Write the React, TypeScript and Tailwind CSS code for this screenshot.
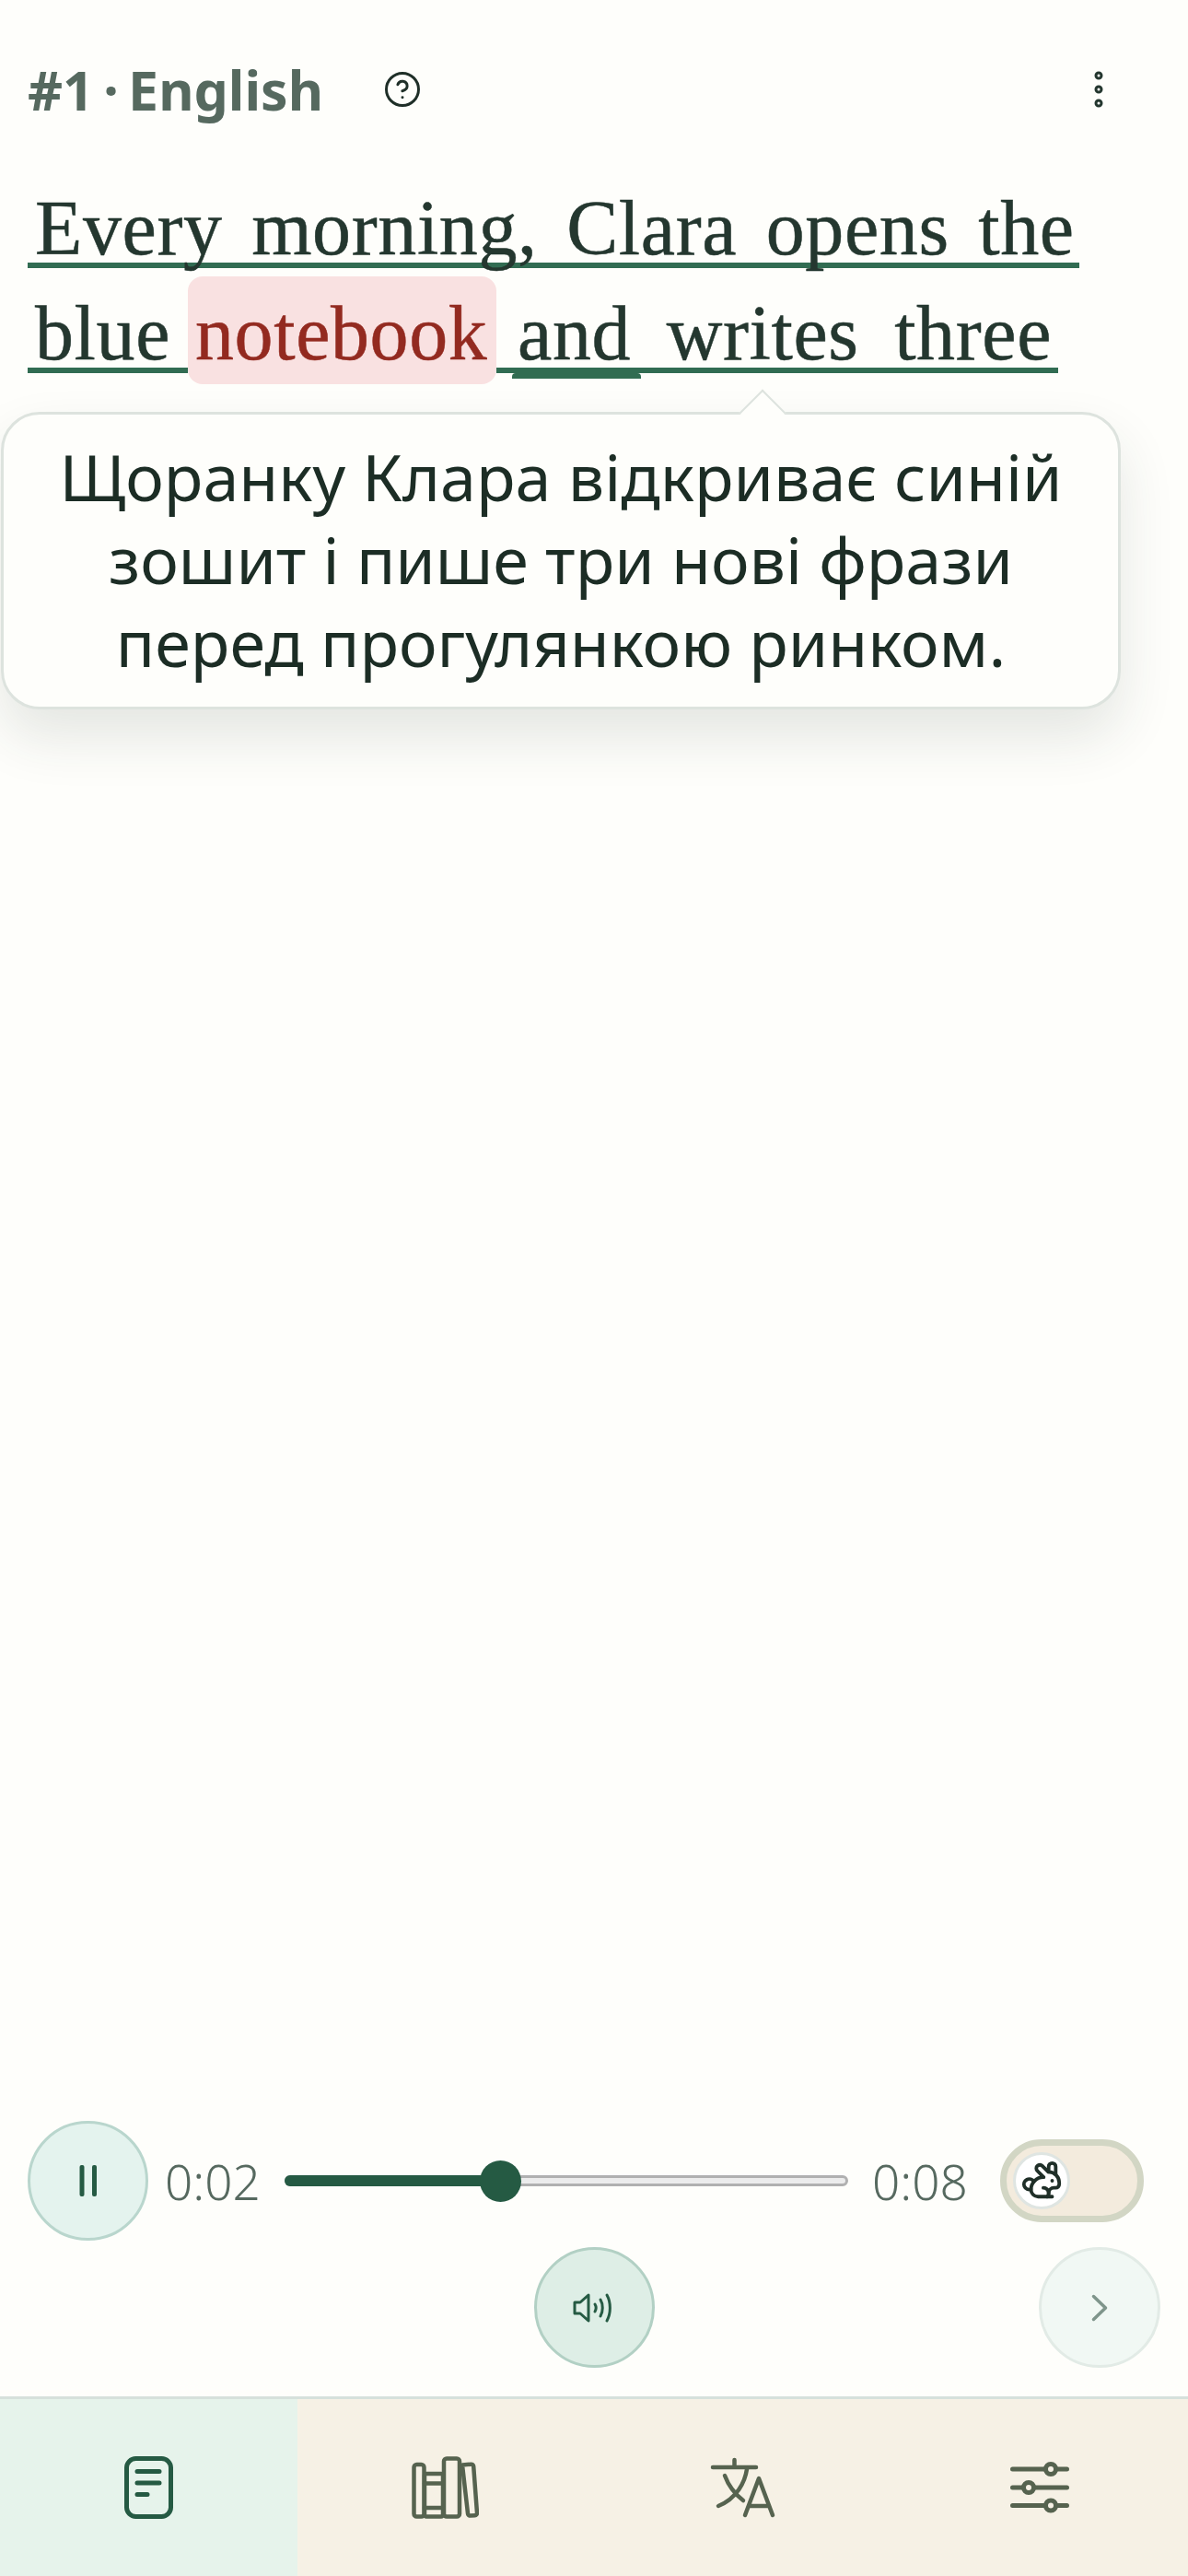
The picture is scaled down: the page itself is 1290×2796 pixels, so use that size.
import React from "react";
import { Rabbit, CircleHelp } from "lucide-react";

export default function App() {
  return (
    <div className="relative flex h-[2796px] w-[1290px] flex-col overflow-hidden bg-[#fefefb]">
      <header className="flex h-[137px] shrink-0 items-end pl-[30px] pr-[90px]">
        <div className="flex w-full items-center">
          <span className="text-[59px] font-bold leading-[80px] text-[#56695f] [word-spacing:-5px] [font-family:'Noto_Sans',sans-serif]">#1 · English</span>
          <CircleHelp className="ml-[65px] h-[42px] w-[42px] text-[#1f2f28]" strokeWidth={1.7} />
          <svg className="ml-auto h-[50px] w-[14px]" viewBox="0 0 14 50" fill="none" stroke="#24372f" strokeWidth="3">
            <circle cx="7" cy="10" r="3" />
            <circle cx="7" cy="25" r="3" />
            <circle cx="7" cy="40" r="3" />
          </svg>
        </div>
      </header>

      <main className="relative flex-1 pl-[30px] text-[84px] leading-[141px] tracking-[0.6px] text-[#24372f] [-webkit-text-stroke:0.5px] [font-family:'Liberation_Serif',serif]">
        <div className="mt-[40px] h-[114px] w-[1142px] whitespace-pre border-b-[6px] border-[#316c52] pl-[8px] [word-spacing:10px]">Every morning, Clara opens the</div>
        <div className="flex h-[126px] items-start">
          <span className="block h-[114px] w-[174px] border-b-[6px] border-[#316c52] pl-[8px]">blue</span>
          <span className="mt-[9px] block h-[117px] w-[335px] rounded-[16px] bg-[#f9e1e1] pl-[8px] leading-[123px] text-[#932a20]">notebook</span>
          <span className="relative block h-[114px] w-[610px] whitespace-pre border-b-[6px] border-[#316c52] pl-[23px] [word-spacing:17px]">
            and writes three
            <span className="absolute left-[17px] top-[114px] h-[6px] w-[140px] rounded-t-[4px] bg-[#316c52]" />
          </span>
        </div>
        <div className="absolute left-[1px] top-[310px] flex h-[323px] w-[1216px] flex-col justify-center rounded-[42px] border-[3px] border-[#dde3de] bg-[#fefefb] pb-[3px] text-center text-[70px] leading-[90px] tracking-normal text-[#1c2d25] shadow-[0_30px_60px_rgba(40,60,50,0.12)] [-webkit-text-stroke:0px] [font-family:'Noto_Sans',sans-serif]">
          <span className="absolute left-[806px] top-[-20px] h-[36px] w-[36px] rotate-45 border-l-[2px] border-t-[2px] border-[#dde3de] bg-[#fefefb]" />
          <span className="relative block">Щоранку Клара відкриває синій</span>
          <span className="relative block">зошит і пише три нові фрази</span>
          <span className="relative block">перед прогулянкою ринком.</span>
        </div>
      </main>

      <section className="shrink-0 pb-[31px] [font-family:'Noto_Sans',sans-serif]">
        <div className="flex items-center pl-[30px]">
          <button className="flex h-[130px] w-[131px] shrink-0 items-center justify-center rounded-full border-[3px] border-[#b9d6cd] bg-[#e4f3ee]">
            <svg className="h-[36px] w-[24px]" viewBox="0 0 24 36" fill="#255a43">
              <rect x="2.500" y="1" width="5" height="34" rx="2" />
              <rect x="16" y="1" width="5" height="34" rx="2" />
            </svg>
          </button>
          <span className="ml-[18px] w-[98px] whitespace-nowrap text-[53px] font-light leading-none text-[#56695f]">0:02</span>
          <div className="relative ml-[32px] h-[12px] w-[612px] rounded-full border-[3px] border-[#b0b0b0] bg-[#ececec]">
            <div className="absolute -left-[3px] -top-[3px] h-[12px] w-[234px] rounded-full bg-[#255a43]" />
            <div className="absolute left-[209px] top-[-19.5px] h-[45px] w-[45px] rounded-full bg-[#255a43]" />
          </div>
          <span className="ml-[26px] w-[98px] whitespace-nowrap text-[53px] font-light leading-none text-[#56695f]">0:08</span>
          <div className="ml-[41px] flex h-[90px] w-[156px] items-center rounded-full border-[7px] border-[#d2d6c4] bg-[#f3ebdd] pl-[7px]">
            <div className="flex h-[62px] w-[62px] items-center justify-center rounded-full border-[3px] border-[#dfe5e2] bg-white">
              <Rabbit className="h-[46px] w-[46px] text-[#1f2f28]" strokeWidth={2} />
            </div>
          </div>
        </div>
        <div className="mt-[7px] grid grid-cols-[1fr_auto_1fr] px-[30px]">
          <div />
          <button className="flex h-[131px] w-[131px] items-center justify-center rounded-full border-[3px] border-[#b2d0c4] bg-[#deeee6]">
            <svg className="h-[42px] w-[46px]" viewBox="0 0 46 42" fill="none" stroke="#255a43" strokeWidth="3" strokeLinecap="round" strokeLinejoin="round">
              <path d="M2 15v12h6l9 8V7l-9 8z" />
              <path d="M24 17c1.500 2.500 1.500 5.500 0 8" />
              <path d="M30 12c3 5 3 13 0 18" />
              <path d="M37 7c4.500 8 4.500 20 0 28" />
            </svg>
          </button>
          <div className="flex justify-end">
            <button className="flex h-[131px] w-[132px] items-center justify-center rounded-full border-[3px] border-[#e2ebe6] bg-[#f1f8f4]">
              <svg className="h-[30px] w-[18px]" viewBox="0 0 18 30" fill="none" stroke="#7f958b" strokeWidth="3.500" strokeLinecap="round" strokeLinejoin="round">
                <path d="M2.500 2.500 15.500 15l-13 12.500" />
              </svg>
            </button>
          </div>
        </div>
      </section>

      <nav className="grid h-[195px] shrink-0 grid-cols-4 border-t-[3px] border-[#d6e1dc] bg-[#f6f1e5]">
        <div className="flex items-center justify-center bg-[#e6f3eb]">
          <svg className="h-[68px] w-[53px]" viewBox="0 0 53 68" fill="none" stroke="#255a43" strokeWidth="5" strokeLinecap="round">
            <rect x="2.500" y="2.500" width="48" height="63" rx="10" />
            <path d="M14 16.500h24M14 29h24M14 41.500h11" />
          </svg>
        </div>
        <div className="flex items-center justify-center">
          <svg className="h-[68px] w-[73px]" viewBox="0 0 73 68" fill="none" stroke="#56634f" strokeWidth="4.500" strokeLinejoin="round" strokeLinecap="round">
            <rect x="2.500" y="9" width="11" height="56.500" rx="3" />
            <rect x="14" y="19" width="20" height="46.500" rx="2" />
            <path d="M14 29.500h20M14 56h20" />
            <rect x="35" y="2.500" width="17" height="63" rx="3" />
            <path d="M55 9.500l9.500-.8a2.500 2.500 0 0 1 2.700 2.300l3.800 50.500a2.500 2.500 0 0 1-2.300 2.700l-5 .4a2.500 2.500 0 0 1-2.700-2.300z" />
          </svg>
        </div>
        <div className="flex items-center justify-center">
          <svg className="h-[68px] w-[72px]" viewBox="0 0 72 68" fill="none" stroke="#56634f" strokeWidth="4.500" strokeLinecap="round" strokeLinejoin="round">
            <path d="M4 12h47M27.500 4v8" />
            <path d="M41 14c-2 14-11 32-31 40" />
            <path d="M17 21c4 11 11 20 20 27" />
            <path d="M39 64l15-40 15 40M43 54h22" />
          </svg>
        </div>
        <div className="flex items-center justify-center">
          <svg className="h-[56px] w-[64px]" viewBox="0 0 64 56" fill="none" stroke="#56634f" strokeWidth="5" strokeLinecap="round">
            <path d="M2.500 8h35M50 8h11.500M2.500 28h11M26 28h35.500M2.500 47.500h35M50 47.500h11.500" />
            <circle cx="44" cy="8" r="5.500" />
            <circle cx="20" cy="28" r="5.500" />
            <circle cx="44" cy="47.500" r="5.500" />
          </svg>
        </div>
      </nav>
    </div>
  );
}
